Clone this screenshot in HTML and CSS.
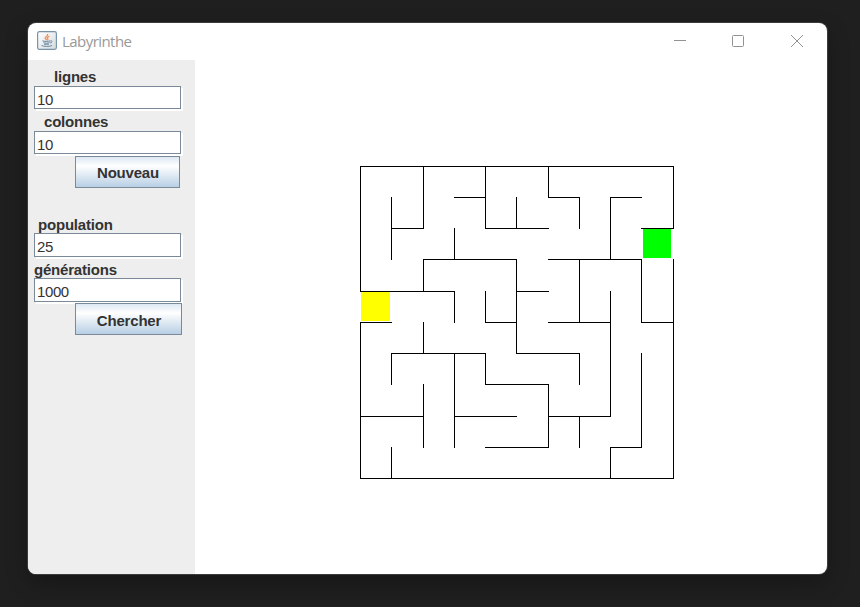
FILE: index.html
```html
<!DOCTYPE html>
<html lang="fr">
<head>
<meta charset="utf-8">
<title>Labyrinthe</title>
<link rel="stylesheet" href="styles.css">
</head>
<body>
<main class="window">
  <header class="titlebar">
    <svg class="app-icon" width="20" height="19" viewBox="0 0 20 19">
      <defs><linearGradient id="tile" x1="0" y1="0" x2="1" y2="1"><stop offset="0" stop-color="#fff"/><stop offset="1" stop-color="#d5dade"/></linearGradient></defs>
      <rect x=".6" y=".6" width="18.8" height="17.8" rx="1.8" fill="url(#tile)" stroke="#7894a8" stroke-width="1.2"/>
      <path d="M10.500 3c1.200 2-3 2.600-2.300 4.300.3.800 1.200 1.100 1.300 2M12.300 5.400c-2.500 1-2.600 1.600-1.500 2.600.3.500 0 1-.4 1.300" fill="none" stroke="#ee8c48" stroke-width="1.200"/>
      <path d="M5.500 9.800c1.500.8 6 .8 7.800 0M6.500 11.600c1.500.8 4.500.8 6 0M7 13c1.500.6 3.500.6 5 0M13.500 10c2.400-.6 1.800 1.800-.5 2M4.500 14.500c2 1.200 8.500 1.200 10.500 0" fill="none" stroke="#6587a0" stroke-width="1"/>
    </svg>
    <h1 class="title">Labyrinthe</h1>
    <svg class="controls" width="130" height="14" viewBox="0 0 130 14">
      <path d="M0 6.500h12" />
      <rect x="58.500" y="1.500" width="11" height="11" rx="1"/>
      <path d="M117 1l12 12M129 1l-12 12"/>
    </svg>
  </header>
  <div class="content">
    <form class="sidebar">
      <label class="label lignes" for="lignes">lignes</label>
      <input class="field" id="lignes" value="10">
      <label class="label colonnes" for="colonnes">colonnes</label>
      <input class="field" id="colonnes" value="10">
      <button class="button nouveau" type="button">Nouveau</button>
      <label class="label population" for="population">population</label>
      <input class="field tall" id="population" value="25">
      <label class="label generations" for="generations">générations</label>
      <input class="field tall" id="generations" value="1000">
      <button class="button chercher" type="button">Chercher</button>
    </form>
    <section class="board">
      <svg class="maze" width="314" height="313" viewBox="0 0 314 313">
        <rect class="start" x="1" y="126" width="29" height="29"/>
        <rect class="goal" x="283" y="63" width="28" height="29"/>
        <g transform="translate(.5 .5)">
          <path d="M0 0H313M94 31H125M188 31H219M250 31H281M31 62H63M125 62H188M281 62H313M63 93H156M188 93H281M0 125H94M156 125H188M0 156H31M125 156H156M188 156H250M281 156H313M31 187H125M156 187H219M125 218H188M0 250H63M94 250H156M188 250H250M125 281H188M250 281H281M0 312H313"/>
          <path d="M0 0V125M0 156V312M31 31V93M31 187V218M31 281V312M63 0V62M63 93V125M63 156V187M63 218V281M94 62V93M94 125V156M94 187V281M125 0V62M125 125V156M125 187V218M156 31V62M156 93V187M188 0V31M188 218V281M219 31V62M219 93V156M219 187V218M219 250V281M250 31V93M250 125V250M250 281V312M281 93V156M281 187V281M313 0V62M313 93V312"/>
        </g>
      </svg>
    </section>
  </div>
</main>
</body>
</html>
```
FILE: styles.css
```css
* { box-sizing: border-box; }

body {
  margin: 0;
  height: 607px;
  padding: 23px 33px 33px 28px;
  overflow: hidden;
  background: #1f1f1f;
  font-family: "Liberation Sans", Arial, sans-serif;
}

.window {
  display: flex;
  flex-direction: column;
  height: 551px;
  border-radius: 8px;
  overflow: hidden;
  background: #fff;
  box-shadow: 0 0 0 1px #3c3c3c, 0 8px 22px rgba(0, 0, 0, .3);
}

.titlebar {
  display: flex;
  align-items: center;
  height: 37px;
  padding: 0 23px 2px 9px;
}

.title {
  margin: 0 0 0 5px;
  font: 400 15px "Open Sans", sans-serif;
  letter-spacing: -.55px;
  color: #999;
}

.controls {
  margin-left: auto;
  fill: none;
  stroke: #929292;
}

.content {
  display: flex;
  flex: 1;
}

.sidebar {
  display: flex;
  flex-direction: column;
  align-items: flex-start;
  width: 167px;
  padding: 8px 0 0 6px;
  background: #eee;
}

.label {
  height: 18px;
  font-size: 15px;
  font-weight: 700;
  line-height: 18px;
  letter-spacing: -.2px;
  color: #333;
}

.lignes { margin-left: 20px; }

.colonnes {
  margin: 4px 0 0 10px;
}

.population {
  height: 17px;
  margin: 28px 0 0 4px;
}

.generations {
  height: 17px;
  margin-top: 4px;
}

.field {
  width: 147px;
  height: 23px;
  padding: 4px 2px 0;
  border: 1px solid #7a8a99;
  border-radius: 0;
  outline: none;
  background: #fff;
  box-shadow: 2px 2px 0 #fff;
  font: 15px "Liberation Sans", Arial, sans-serif;
  letter-spacing: -.4px;
  color: #333;
}

.tall {
  height: 24px;
  padding-top: 2px;
}

.button {
  height: 32px;
  margin-left: 41px;
  padding: 1px 0 0 1px;
  border: 1px solid #7a8a99;
  border-radius: 0;
  background: linear-gradient(#dde8f3 0, #fff 30%, #e0eaf3 60%, #b8cfe5 100%);
  font: 700 15px "Liberation Sans", Arial, sans-serif;
  letter-spacing: -.2px;
  color: #333;
}

.nouveau {
  width: 105px;
  margin-top: 2px;
}

.chercher {
  width: 107px;
  margin-top: 1px;
  padding-top: 2px;
}

.board {
  flex: 1;
  padding: 106px 0 0 165px;
}

.maze {
  display: block;
  fill: none;
  stroke: #000;
  stroke-linecap: square;
  shape-rendering: crispEdges;
}

.start {
  fill: #ff0;
  stroke: none;
}

.goal {
  fill: #0f0;
  stroke: none;
}
```
